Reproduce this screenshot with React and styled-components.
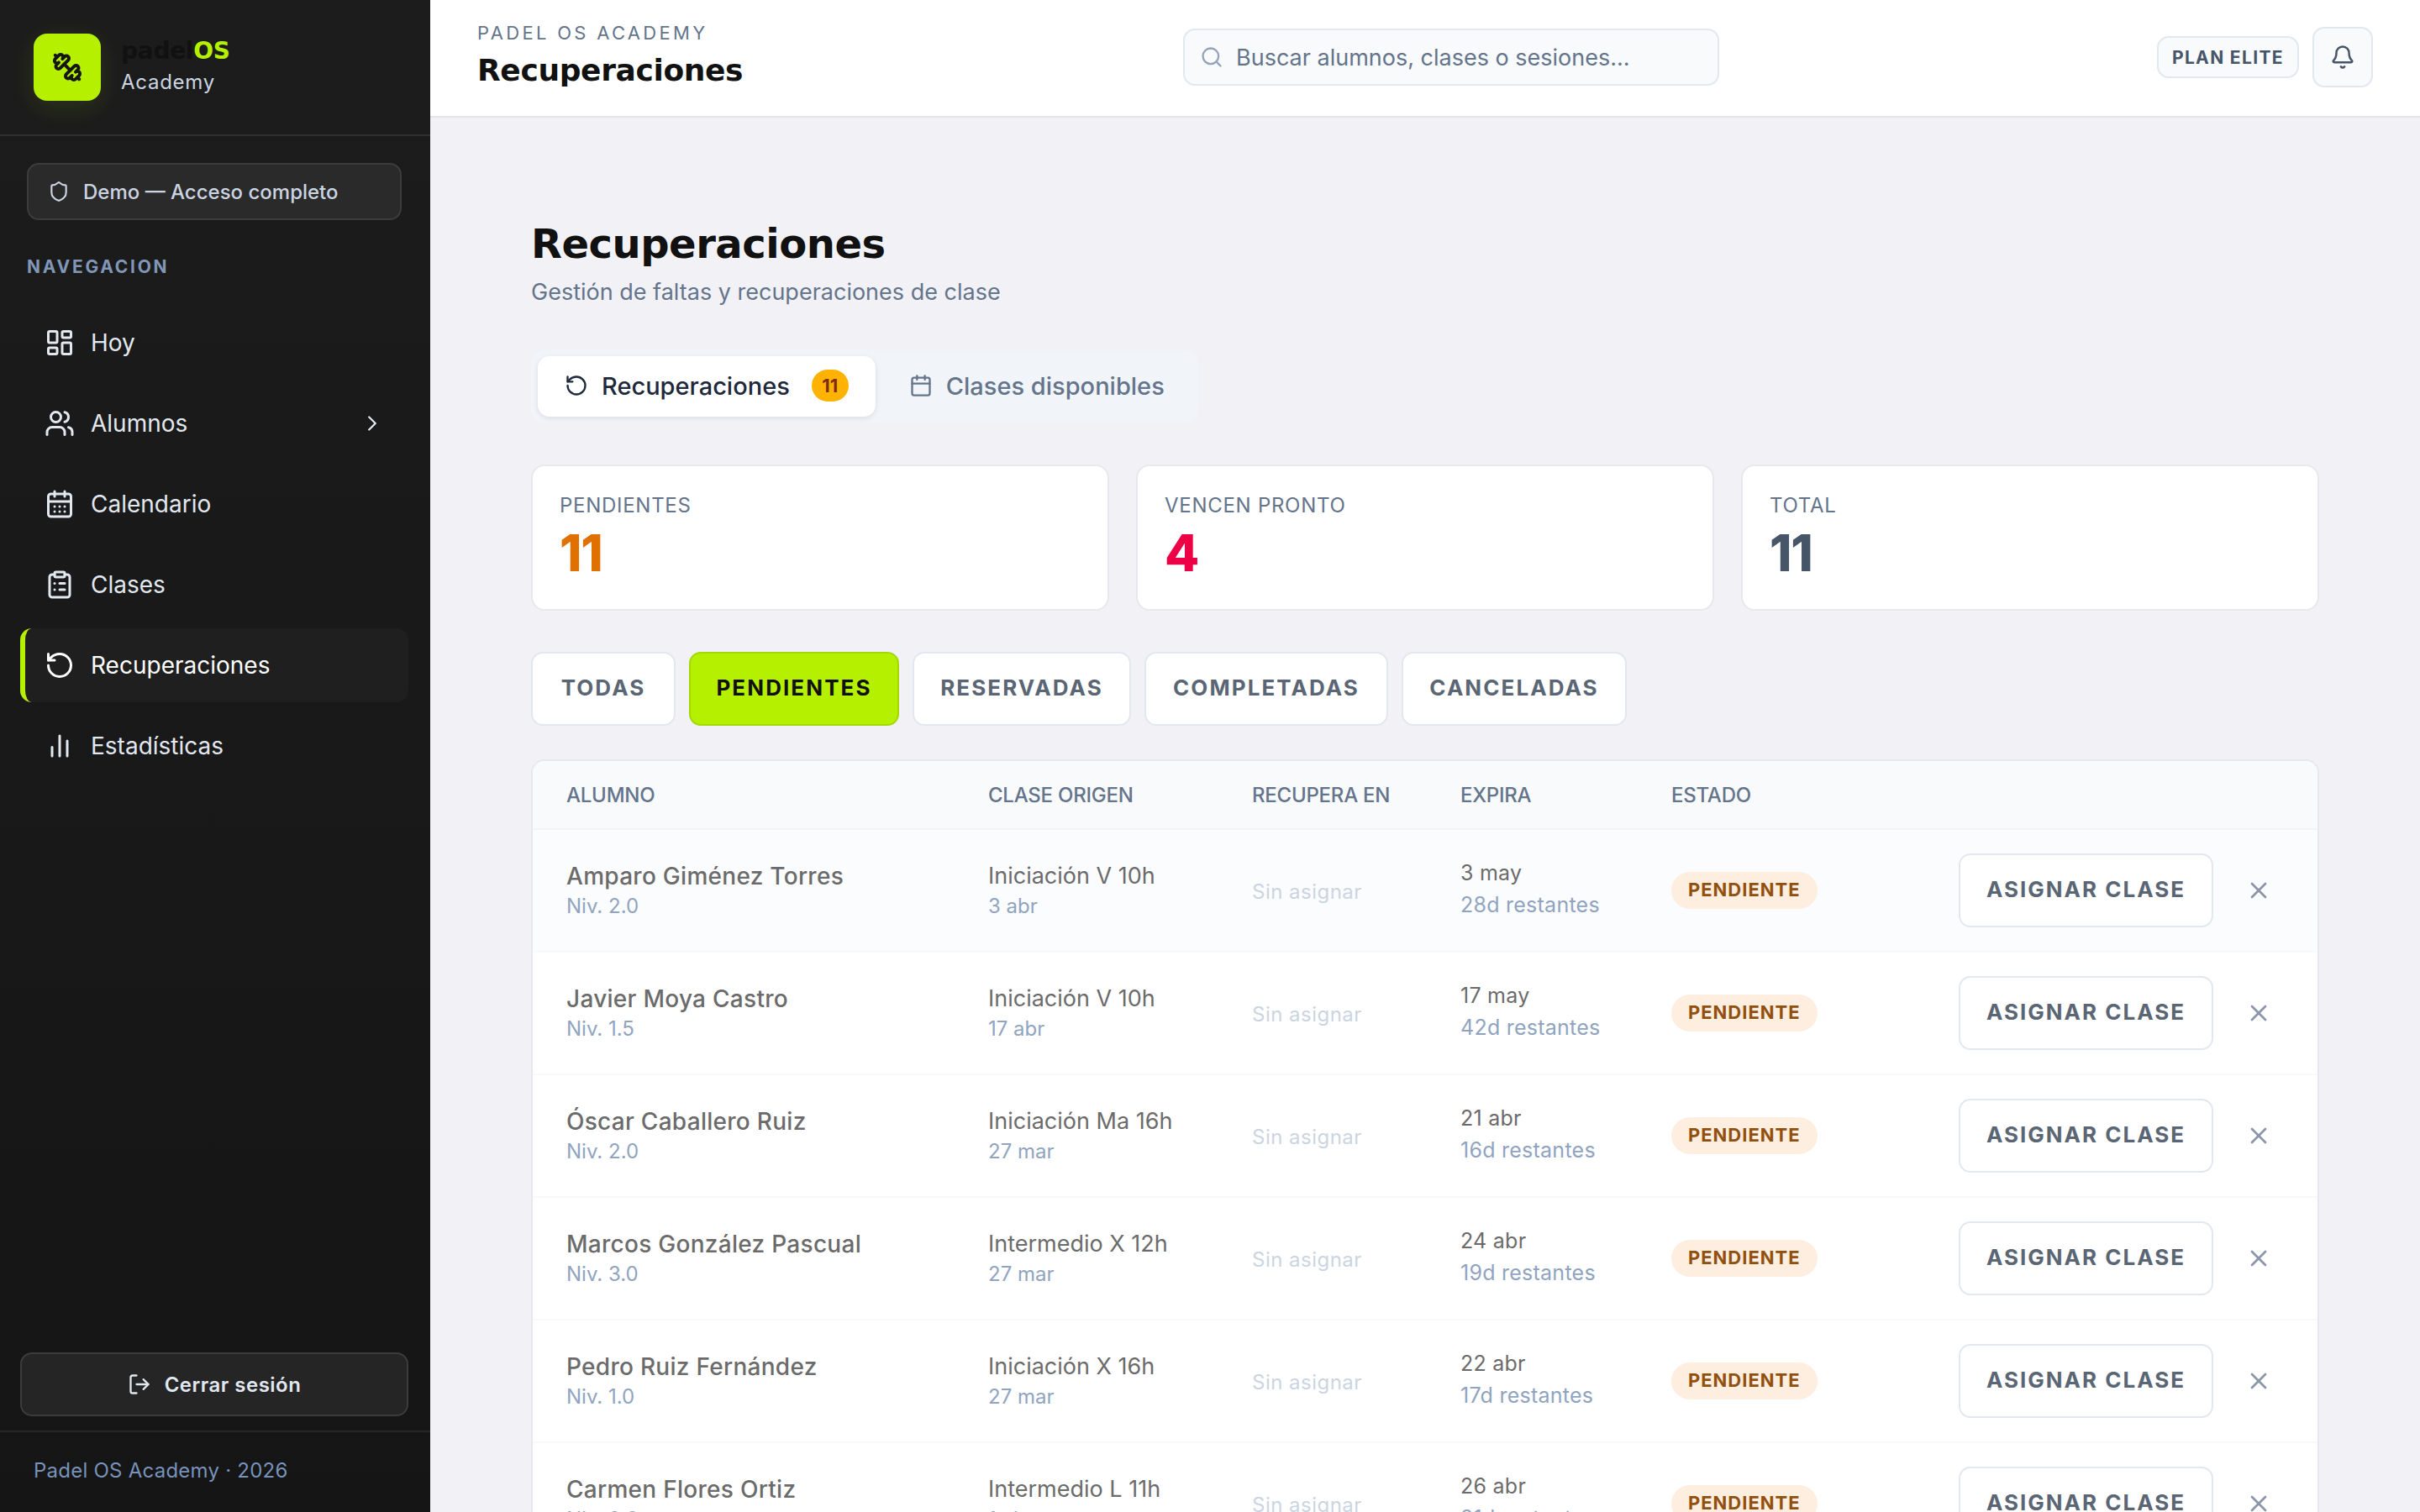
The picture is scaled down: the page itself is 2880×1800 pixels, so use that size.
import styled, { createGlobalStyle } from 'styled-components';
import {
    LayoutDashboard, Users, CalendarDays, ClipboardList, RotateCcw,
    ChevronRight, Shield, LogOut, Search, Bell, X, Calendar, Dumbbell,
} from 'lucide-react';

const GlobalStyle = createGlobalStyle`
    html, body {
        margin: 0;
        padding: 0;
        height: 100%;
        overflow: hidden;
    }
    body {
        font-family: Inter, "Liberation Sans", sans-serif;
        background: #f1f1f6;
    }
    * {
        box-sizing: border-box;
    }
`;

const Layout = styled.div`
    display: flex;
    width: 2880px;
    height: 1800px;
    overflow: hidden;
`;

const Sidebar = styled.aside`
    width: 512px;
    flex-shrink: 0;
    height: 100%;
    display: flex;
    flex-direction: column;
    background: linear-gradient(180deg, #1c1c1c 0%, #151515 100%);
`;

const Brand = styled.div`
    height: 162px;
    padding: 40px 40px 0;
    display: flex;
    gap: 24px;
    border-bottom: 2px solid #2f2f2f;
`;

const LogoBox = styled.div`
    width: 80px;
    height: 80px;
    border-radius: 16px;
    background: #b5f000;
    color: #151515;
    display: flex;
    align-items: center;
    justify-content: center;
    box-shadow: 0 8px 32px rgba(181, 240, 0, 0.12);
`;

const LogoIcon = styled(Dumbbell)`
    transform: rotate(90deg);
`;

const BrandText = styled.div`
    display: flex;
    flex-direction: column;
    padding-top: 2px;
`;

const BrandName = styled.div`
    font-family: "DejaVu Sans", sans-serif;
    font-size: 28px;
    font-weight: 700;
    line-height: 38px;
    letter-spacing: -0.01em;
    color: #111111;
`;

const Lime = styled.span`
    color: #b5f000;
`;

const BrandSub = styled.div`
    font-size: 24px;
    line-height: 36px;
    letter-spacing: 0.03em;
    color: #cbd5e1;
`;

const DemoBadge = styled.div`
    margin: 32px 34px 0 32px;
    height: 68px;
    padding: 0 23px;
    display: flex;
    align-items: center;
    gap: 16px;
    background: #2a2a2a;
    border: 2px solid #3c3c3c;
    border-radius: 14px;
    color: #cbd5e1;
    font-size: 24px;
    font-weight: 500;
`;

const NavLabel = styled.div`
    margin: 42px 32px 0;
    font-size: 21px;
    font-weight: 700;
    line-height: 28px;
    letter-spacing: 0.13em;
    color: #8197b8;
`;

const Nav = styled.nav`
    margin: 32px 26px 0 24px;
    display: flex;
    flex-direction: column;
    gap: 8px;
`;

const NavItem = styled.div`
    height: 88px;
    padding: 0 28px 0 23px;
    display: flex;
    align-items: center;
    gap: 19px;
    border-radius: 14px;
    font-size: 28px;
    font-weight: 400;
    color: ${p => (p.$active ? '#ffffff' : '#e2e8f0')};
    background: ${p => (p.$active ? '#1f1f1f' : 'transparent')};
    border-left: 6px solid ${p => (p.$active ? '#b5f000' : 'transparent')};
    svg {
        flex-shrink: 0;
    }
`;

const NavText = styled.span`
    flex: 1;
`;

const SidebarBottom = styled.div`
    margin-top: auto;
`;

const LogoutButton = styled.div`
    margin: 0 26px 0 24px;
    height: 76px;
    display: flex;
    align-items: center;
    justify-content: center;
    gap: 16px;
    background: #252525;
    border: 2px solid #3c3c3c;
    border-radius: 14px;
    color: #e2e8f0;
    font-size: 24px;
    font-weight: 600;
    letter-spacing: 0.02em;
`;

const SidebarFooter = styled.div`
    margin-top: 17px;
    height: 97px;
    padding: 28px 40px 0;
    border-top: 2px solid #262626;
    font-size: 24px;
    line-height: 36px;
    letter-spacing: 0.01em;
    color: #7893bb;
`;

const MainColumn = styled.div`
    flex: 1;
    min-width: 0;
    display: flex;
    flex-direction: column;
`;

const TopBar = styled.header`
    height: 140px;
    flex-shrink: 0;
    padding: 0 56px 2px;
    display: grid;
    grid-template-columns: 840px 638px 1fr;
    align-items: center;
    background: #ffffff;
    border-bottom: 2px solid #e4e6ea;
`;

const TopTitles = styled.div`
    display: flex;
    flex-direction: column;
    padding-bottom: 4px;
`;

const Eyebrow = styled.div`
    margin-bottom: 6px;
    font-size: 22px;
    line-height: 30px;
    letter-spacing: 0.15em;
    color: #64748b;
`;

const TopTitle = styled.div`
    font-family: "DejaVu Sans", sans-serif;
    font-size: 36px;
    font-weight: 700;
    line-height: 48px;
    letter-spacing: -0.01em;
    color: #111111;
`;

const SearchBox = styled.div`
    height: 68px;
    padding: 0 18px;
    display: flex;
    align-items: center;
    gap: 15px;
    background: #f8fafc;
    border: 2px solid #e2e8f0;
    border-radius: 14px;
    color: #64748b;
    font-size: 27px;
    svg {
        color: #94a3b8;
    }
`;

const TopActions = styled.div`
    display: flex;
    justify-content: flex-end;
    align-items: center;
    gap: 16px;
`;

const PlanTag = styled.div`
    height: 50px;
    padding: 0 16px;
    display: flex;
    align-items: center;
    background: #f8fafc;
    border: 2px solid #e2e8f0;
    border-radius: 14px;
    color: #475569;
    font-size: 21px;
    font-weight: 700;
    letter-spacing: 0.065em;
`;

const BellButton = styled.div`
    width: 72px;
    height: 72px;
    display: flex;
    align-items: center;
    justify-content: center;
    background: #f8fafc;
    border: 2px solid #e2e8f0;
    border-radius: 14px;
    color: #475569;
`;

const Content = styled.main`
    flex: 1;
    min-height: 0;
    overflow: hidden;
    padding: 118px 120px 0;
`;

const PageTitle = styled.h1`
    margin: 0;
    font-family: "DejaVu Sans", sans-serif;
    font-size: 48px;
    font-weight: 700;
    line-height: 64px;
    letter-spacing: -0.01em;
    color: #111111;
`;

const PageSub = styled.p`
    margin: 6px 0 0;
    font-size: 27px;
    line-height: 40px;
    color: #64748b;
`;

const TabBar = styled.div`
    margin-top: 49px;
    width: fit-content;
    padding: 7px 8px;
    display: flex;
    gap: 8px;
    background: #f1f5f9;
    border-radius: 16px;
`;

const Tab = styled.div`
    height: 72px;
    padding: 0 32px 2px;
    display: flex;
    align-items: center;
    gap: 16px;
    border-radius: 14px;
    font-size: 29px;
    font-weight: 500;
    color: ${p => (p.$active ? '#1e293b' : '#64748b')};
    background: ${p => (p.$active ? '#ffffff' : 'transparent')};
    box-shadow: ${p => (p.$active ? '0 2px 6px rgba(15, 23, 42, 0.1)' : 'none')};
`;

const TabCount = styled.span`
    min-width: 44px;
    height: 38px;
    margin-left: 10px;
    display: inline-flex;
    align-items: center;
    justify-content: center;
    border-radius: 19px;
    background: #ffb300;
    color: #7c2d12;
    font-size: 22px;
    font-weight: 700;
`;

const StatGrid = styled.div`
    margin-top: 50px;
    display: grid;
    grid-template-columns: repeat(3, 1fr);
    gap: 32px;
`;

const StatCard = styled.div`
    height: 174px;
    padding: 30px 32px 0;
    background: #ffffff;
    border: 2px solid #e6e8ed;
    border-radius: 16px;
`;

const StatLabel = styled.div`
    font-size: 24px;
    line-height: 34px;
    letter-spacing: 0.03em;
    color: #64748b;
`;

const StatValue = styled.div`
    margin-top: 7px;
    font-size: 60px;
    font-weight: 800;
    line-height: 64px;
    letter-spacing: -0.02em;
    color: ${p => p.$color};
`;

const FilterRow = styled.div`
    margin-top: 49px;
    display: flex;
    gap: 16px;
`;

const FilterChip = styled.div`
    width: ${p => p.$width}px;
    height: 88px;
    padding-bottom: 4px;
    display: flex;
    align-items: center;
    justify-content: center;
    border-radius: 14px;
    border: 2px solid ${p => (p.$active ? '#a3d900' : '#e2e8f0')};
    background: ${p => (p.$active ? '#b5f000' : '#ffffff')};
    color: ${p => (p.$active ? '#111111' : '#5b6675')};
    font-size: 26px;
    font-weight: 700;
    letter-spacing: 0.08em;
`;

const Table = styled.div`
    margin-top: 40px;
    background: #ffffff;
    border: 2px solid #e6e8ed;
    border-radius: 16px 16px 0 0;
`;

const columns = '502px 314px 248px 251px 1fr';

const HeadRow = styled.div`
    height: 82px;
    padding: 0 40px;
    display: grid;
    grid-template-columns: ${columns};
    align-items: center;
    background: #f8fafc;
    border-bottom: 2px solid #f1f3f7;
    border-radius: 14px 14px 0 0;
    font-size: 24px;
    font-weight: 500;
    letter-spacing: -0.01em;
    color: #64748b;
`;

const Row = styled.div`
    height: 146px;
    padding: 0 40px;
    display: grid;
    grid-template-columns: ${columns};
    align-items: center;
    background: ${p => (p.$hover ? '#fbfcfe' : '#ffffff')};
    border-bottom: 2px solid #f8f9fb;
`;

const Stack = styled.div`
    display: flex;
    flex-direction: column;
`;

const ExpiryStack = styled(Stack)`
    padding-bottom: 4px;
`;

const StudentName = styled.div`
    font-size: 28px;
    font-weight: 500;
    line-height: 38px;
    letter-spacing: 0.01em;
    color: #6b6b6b;
`;

const ClassName = styled.div`
    font-size: 27px;
    line-height: 38px;
    color: #6b6b6b;
`;

const SubText = styled.div`
    font-size: 24px;
    line-height: 34px;
    color: #90a4c0;
`;

const Unassigned = styled.div`
    padding-top: 2px;
    font-size: 24px;
    letter-spacing: 0.02em;
    color: #cbd5e1;
`;

const ExpiryDate = styled.div`
    font-size: 25px;
    line-height: 38px;
    letter-spacing: 0.01em;
    color: #6b6b6b;
`;

const ExpiryLeft = styled.div`
    font-size: 25px;
    line-height: 38px;
    letter-spacing: 0.01em;
    color: #90a4c0;
`;

const ActionsCell = styled.div`
    display: flex;
    align-items: center;
    justify-content: space-between;
`;

const StatusPill = styled.span`
    height: 44px;
    padding: 0 20px 2px;
    display: inline-flex;
    align-items: center;
    border-radius: 22px;
    background: #fdeee0;
    color: #92500f;
    font-size: 22px;
    font-weight: 700;
    letter-spacing: 0.045em;
`;

const AssignButton = styled.div`
    height: 88px;
    padding: 0 31px 4px;
    display: flex;
    align-items: center;
    border: 2px solid #e2e8f0;
    border-radius: 14px;
    background: #ffffff;
    color: #5b6675;
    font-size: 26px;
    font-weight: 700;
    letter-spacing: 0.077em;
`;

const RowActions = styled.div`
    display: flex;
    align-items: center;
    gap: 38px;
    margin-right: 14px;
    color: #8a96a8;
`;

// three bars, the middle one tallest
const BarsIcon = ({ size, strokeWidth }) => (
    <svg width={size} height={size} viewBox="0 0 24 24" fill="none" stroke="currentColor" strokeWidth={strokeWidth} strokeLinecap="round">
        <path d="M6 20v-7" />
        <path d="M12 20V4" />
        <path d="M18 20V8" />
    </svg>
);

const navItems = [
    { label: 'Hoy', icon: LayoutDashboard },
    { label: 'Alumnos', icon: Users, more: true },
    { label: 'Calendario', icon: CalendarDays },
    { label: 'Clases', icon: ClipboardList },
    { label: 'Recuperaciones', icon: RotateCcw, active: true },
    { label: 'Estadísticas', icon: BarsIcon },
];

const stats = [
    { label: 'PENDIENTES', value: 11, color: '#e07000' },
    { label: 'VENCEN PRONTO', value: 4, color: '#ee0047' },
    { label: 'TOTAL', value: 11, color: '#475569' },
];

const filters = [
    { label: 'TODAS', width: 172 },
    { label: 'PENDIENTES', width: 250 },
    { label: 'RESERVADAS', width: 260 },
    { label: 'COMPLETADAS', width: 290 },
    { label: 'CANCELADAS', width: 268 },
];

const rows = [
    { name: 'Amparo Giménez Torres', level: 'Niv. 2.0', origin: 'Iniciación V 10h', originDate: '3 abr', expires: '3 may', left: '28d restantes' },
    { name: 'Javier Moya Castro', level: 'Niv. 1.5', origin: 'Iniciación V 10h', originDate: '17 abr', expires: '17 may', left: '42d restantes' },
    { name: 'Óscar Caballero Ruiz', level: 'Niv. 2.0', origin: 'Iniciación Ma 16h', originDate: '27 mar', expires: '21 abr', left: '16d restantes' },
    { name: 'Marcos González Pascual', level: 'Niv. 3.0', origin: 'Intermedio X 12h', originDate: '27 mar', expires: '24 abr', left: '19d restantes' },
    { name: 'Pedro Ruiz Fernández', level: 'Niv. 1.0', origin: 'Iniciación X 16h', originDate: '27 mar', expires: '22 abr', left: '17d restantes' },
    { name: 'Carmen Flores Ortiz', level: 'Niv. 2.0', origin: 'Intermedio L 11h', originDate: '1 abr', expires: '26 abr', left: '21d restantes' },
];

export default function App() {
    return <Layout>
        <GlobalStyle />
        <Sidebar>
            <Brand>
                <LogoBox><LogoIcon size={36} strokeWidth={2.6} /></LogoBox>
                <BrandText>
                    <BrandName>padel<Lime>OS</Lime></BrandName>
                    <BrandSub>Academy</BrandSub>
                </BrandText>
            </Brand>
            <DemoBadge><Shield size={26} />Demo — Acceso completo</DemoBadge>
            <NavLabel>NAVEGACION</NavLabel>
            <Nav>
                {navItems.map(item => {
                    const Icon = item.icon;
                    return <NavItem key={item.label} $active={item.active}>
                        <Icon size={36} strokeWidth={2} />
                        <NavText>{item.label}</NavText>
                        {item.more && <ChevronRight size={30} strokeWidth={1.8} />}
                    </NavItem>;
                })}
            </Nav>
            <SidebarBottom>
                <LogoutButton><LogOut size={28} />Cerrar sesión</LogoutButton>
                <SidebarFooter>Padel OS Academy · 2026</SidebarFooter>
            </SidebarBottom>
        </Sidebar>
        <MainColumn>
            <TopBar>
                <TopTitles>
                    <Eyebrow>PADEL OS ACADEMY</Eyebrow>
                    <TopTitle>Recuperaciones</TopTitle>
                </TopTitles>
                <SearchBox><Search size={28} />Buscar alumnos, clases o sesiones...</SearchBox>
                <TopActions>
                    <PlanTag>PLAN ELITE</PlanTag>
                    <BellButton><Bell size={30} /></BellButton>
                </TopActions>
            </TopBar>
            <Content>
                <PageTitle>Recuperaciones</PageTitle>
                <PageSub>Gestión de faltas y recuperaciones de clase</PageSub>
                <TabBar>
                    <Tab $active><RotateCcw size={28} />Recuperaciones<TabCount>11</TabCount></Tab>
                    <Tab><Calendar size={28} />Clases disponibles</Tab>
                </TabBar>
                <StatGrid>
                    {stats.map(stat => <StatCard key={stat.label}>
                        <StatLabel>{stat.label}</StatLabel>
                        <StatValue $color={stat.color}>{stat.value}</StatValue>
                    </StatCard>)}
                </StatGrid>
                <FilterRow>
                    {filters.map(f => <FilterChip key={f.label} $width={f.width} $active={f.label === 'PENDIENTES'}>{f.label}</FilterChip>)}
                </FilterRow>
                <Table>
                    <HeadRow>
                        <div>ALUMNO</div>
                        <div>CLASE ORIGEN</div>
                        <div>RECUPERA EN</div>
                        <div>EXPIRA</div>
                        <div>ESTADO</div>
                    </HeadRow>
                    {rows.map((row, index) => <Row key={row.name} $hover={index === 0}>
                        <Stack>
                            <StudentName>{row.name}</StudentName>
                            <SubText>{row.level}</SubText>
                        </Stack>
                        <Stack>
                            <ClassName>{row.origin}</ClassName>
                            <SubText>{row.originDate}</SubText>
                        </Stack>
                        <Unassigned>Sin asignar</Unassigned>
                        <ExpiryStack>
                            <ExpiryDate>{row.expires}</ExpiryDate>
                            <ExpiryLeft>{row.left}</ExpiryLeft>
                        </ExpiryStack>
                        <ActionsCell>
                            <StatusPill>PENDIENTE</StatusPill>
                            <RowActions>
                                <AssignButton>ASIGNAR CLASE</AssignButton>
                                <X size={32} />
                            </RowActions>
                        </ActionsCell>
                    </Row>)}
                </Table>
            </Content>
        </MainColumn>
    </Layout>;
}
